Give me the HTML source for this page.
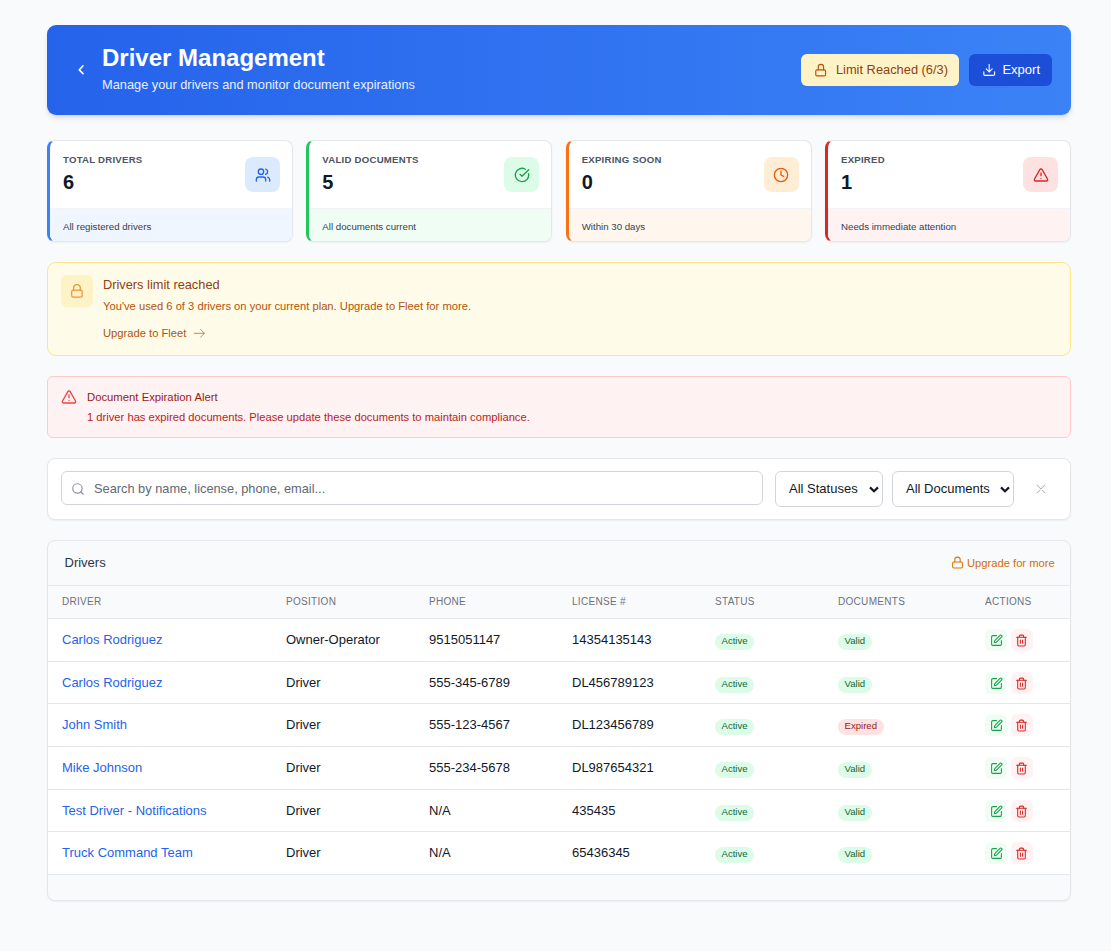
<!DOCTYPE html>
<html><head><meta charset="utf-8">
<style>
*{box-sizing:border-box;margin:0;padding:0}
html,body{width:1111px;height:951px;overflow:hidden;background:#f9fafb;font-family:"Liberation Sans",sans-serif;color:#111827}
.abs{position:absolute}
svg{display:block}
/* header */
.hdr{position:absolute;left:47px;top:25px;width:1024px;height:90px;border-radius:9px;background:linear-gradient(90deg,#2563eb 0%,#3b82f6 100%);box-shadow:0 4px 6px -1px rgba(0,0,0,.1),0 2px 4px -2px rgba(0,0,0,.1)}
.hdr .t{position:absolute;left:55px;top:17px;font-size:24px;line-height:32px;font-weight:700;color:#fff;white-space:nowrap}
.hdr .s{position:absolute;left:55px;top:51px;font-size:12.8px;line-height:18px;color:#e8f0fe;white-space:nowrap}
.btn{position:absolute;top:29px;height:32px;border-radius:6px;display:flex;align-items:center;padding:0 12px;font-size:13px;white-space:nowrap}
.btn svg{margin-right:6px;margin-left:1px}
.b1{left:754px;width:158px;background:#fef3c7;color:#92400e}
.b2{left:922px;width:83px;background:#1d4ed8;color:#fff}
/* stat cards */
.card{position:absolute;top:140px;width:246px;height:102px;background:#fff;border:1px solid #e5e7eb;border-left:3px solid;border-radius:8px;overflow:hidden;box-shadow:0 1px 2px rgba(0,0,0,.05)}
.card .lab{position:absolute;left:13px;top:13px;font-size:9.6px;line-height:12px;font-weight:700;letter-spacing:.25px;color:#4b5563;white-space:nowrap}
.card .num{position:absolute;left:13px;top:29px;font-size:20px;line-height:24px;font-weight:700;color:#111827}
.card .ic{position:absolute;right:12px;top:16px;width:35px;height:35px;border-radius:8px;display:flex;align-items:center;justify-content:center}
.card .ft{position:absolute;left:0;right:0;bottom:0;height:33px;border-top:1px solid #f1f3f6;font-size:9.7px;line-height:12px;padding:12px 0 0 13px;color:#374151;white-space:nowrap}
/* alerts */
.al1{position:absolute;left:47px;top:262px;width:1024px;height:94px;background:#fefce8;border:1px solid #fde68a;border-radius:9px}
.al2{position:absolute;left:47px;top:376px;width:1024px;height:62px;background:#fef2f2;border:1px solid #fecaca;border-radius:6px}
/* filter */
.flt{position:absolute;left:47px;top:458px;width:1024px;height:62px;background:#fff;border:1px solid #e5e7eb;border-radius:8px;box-shadow:0 1px 2px rgba(0,0,0,.05)}
.inp{position:absolute;left:13px;top:12px;width:702px;height:34px;border:1px solid #d1d5db;border-radius:6px}
.sel{position:absolute;top:12px;height:36px;border:1px solid #d1d5db;border-radius:6px;font-size:13px;line-height:34px;padding-left:13px;color:#111827;white-space:nowrap}
/* table */
.tbl{position:absolute;left:47px;top:540px;width:1024px;height:361px;background:#f9fafb;border:1px solid #e5e7eb;border-radius:8px;overflow:hidden;box-shadow:0 1px 2px rgba(0,0,0,.05)}
.th{position:absolute;top:44px;left:0;right:0;height:34px;border-top:1px solid #e5e7eb;border-bottom:1px solid #e5e7eb;background:#f9fafb}
.th span{position:absolute;top:10px;font-size:10px;line-height:12px;color:#6b7280;letter-spacing:.3px}
.row{position:absolute;left:0;right:0;height:43px;background:#fff;border-bottom:1px solid #e5e7eb}
.row span.c{position:absolute;top:12.5px;font-size:13px;line-height:16px;color:#111827;white-space:nowrap}
.row span.n{color:#2563eb}
.bdg{position:absolute;top:15px;height:16px;border-radius:8px;font-size:9.6px;line-height:13px;padding:0 6.5px;white-space:nowrap}
.ok{background:#dcfce7;color:#166534}
.bad{background:#fee2e2;color:#991b1b}
.act{position:absolute;top:10px;width:22px;height:22px;border-radius:6px;display:flex;align-items:center;justify-content:center}
</style></head>
<body>

<!-- header -->
<div class="hdr">
  <svg class="abs" style="left:25px;top:36px" width="18" height="18" viewBox="0 0 18 18" fill="none" stroke="#fff" stroke-width="1.55" stroke-linecap="round" stroke-linejoin="round"><path d="M11 4.7 7.2 8.9 11 12.6"/></svg>
  <div class="t">Driver Management</div>
  <div class="s">Manage your drivers and monitor document expirations</div>
  <div class="btn b1"><svg width="16" height="16" viewBox="0 0 16 16" fill="none" stroke="#b45309" stroke-width="1.25" stroke-linecap="round" stroke-linejoin="round"><rect x="1.9" y="7.8" width="10.5" height="6.5" rx="1.3"/><path d="M4.6 7.8V4.75a2.85 2.85 0 0 1 5.7 0V7.8"/></svg><span style="position:relative;top:-1px;left:1px;font-size:12.85px">Limit Reached (6/3)</span></div>
  <div class="btn b2"><svg width="16" height="16" viewBox="0 0 24 24" fill="none" stroke="#fff" stroke-width="1.8" stroke-linecap="round" stroke-linejoin="round"><path d="M21 15v4a2 2 0 0 1-2 2H5a2 2 0 0 1-2-2v-4"/><polyline points="7 10 12 15 17 10"/><line x1="12" x2="12" y1="15" y2="3"/></svg><span style="position:relative;top:-1px">Export</span></div>
</div>

<!-- stat cards -->
<div class="card" style="left:47px;border-left-color:#3b82f6">
  <div class="lab">TOTAL DRIVERS</div><div class="num">6</div>
  <div class="ic" style="background:#dbeafe"><svg width="16" height="16" viewBox="0 0 24 24" fill="none" stroke="#2563eb" stroke-width="2" stroke-linecap="round" stroke-linejoin="round"><path d="M16 21v-2a4 4 0 0 0-4-4H6a4 4 0 0 0-4 4v2"/><circle cx="9" cy="7" r="4"/><path d="M22 21v-2a4 4 0 0 0-3-3.87"/><path d="M16 3.13a4 4 0 0 1 0 7.75"/></svg></div>
  <div class="ft" style="background:#eff6ff">All registered drivers</div>
</div>
<div class="card" style="left:306.33px;border-left-color:#22c55e">
  <div class="lab">VALID DOCUMENTS</div><div class="num">5</div>
  <div class="ic" style="background:#dcfce7"><svg width="16" height="16" viewBox="0 0 24 24" fill="none" stroke="#16a34a" stroke-width="2" stroke-linecap="round" stroke-linejoin="round"><path d="M21.801 10A10 10 0 1 1 17 3.335"/><path d="m9 11 3 3L22 4"/></svg></div>
  <div class="ft" style="background:#f0fdf4">All documents current</div>
</div>
<div class="card" style="left:565.67px;border-left-color:#f97316">
  <div class="lab">EXPIRING SOON</div><div class="num">0</div>
  <div class="ic" style="background:#ffedd5"><svg width="16" height="16" viewBox="0 0 24 24" fill="none" stroke="#ea580c" stroke-width="2" stroke-linecap="round" stroke-linejoin="round"><circle cx="12" cy="12" r="10"/><polyline points="12 6 12 12 16 14"/></svg></div>
  <div class="ft" style="background:#fff7ed">Within 30 days</div>
</div>
<div class="card" style="left:825px;border-left-color:#dc2626">
  <div class="lab">EXPIRED</div><div class="num">1</div>
  <div class="ic" style="background:#fee2e2"><svg width="16" height="16" viewBox="0 0 24 24" fill="none" stroke="#dc2626" stroke-width="2" stroke-linecap="round" stroke-linejoin="round"><path d="m21.73 18-8-14a2 2 0 0 0-3.48 0l-8 14A2 2 0 0 0 4 21h16a2 2 0 0 0 1.73-3"/><path d="M12 9v4"/><path d="M12 17h.01"/></svg></div>
  <div class="ft" style="background:#fef2f2">Needs immediate attention</div>
</div>

<!-- limit alert -->
<div class="al1">
  <div class="abs" style="left:13px;top:12px;width:32px;height:32px;border-radius:6px;background:#fef3c7"><svg class="abs" style="left:0;top:0" width="32" height="32" viewBox="0 0 32 32" fill="none" stroke="#f0933a" stroke-width="1.25" stroke-linecap="round" stroke-linejoin="round"><rect x="10.7" y="15.2" width="10.5" height="7" rx="1.6"/><path d="M12.6 15.2V12.85a3.35 3.35 0 0 1 6.7 0V15.2"/></svg></div>
  <div class="abs" style="left:55px;top:14px;font-size:12.8px;line-height:16px;color:#92400e;white-space:nowrap">Drivers limit reached</div>
  <div class="abs" style="left:55px;top:36px;font-size:11.2px;line-height:14px;color:#b45309;white-space:nowrap">You've used 6 of 3 drivers on your current plan. Upgrade to Fleet for more.</div>
  <div class="abs" style="left:55px;top:63px;font-size:11.2px;line-height:14px;color:#b45309;white-space:nowrap">Upgrade to Fleet</div>
  <svg class="abs" style="left:145px;top:66px" width="12" height="10" viewBox="0 0 12 10" fill="none" stroke="#c7822f" stroke-width="0.95" stroke-linecap="round" stroke-linejoin="round"><path d="M1.3 4.3h10M7.6 0.4l3.8 3.9-3.8 3.9"/></svg>
</div>

<!-- doc alert -->
<div class="al2">
  <svg class="abs" style="left:13px;top:12px" width="16" height="16" viewBox="0 0 24 24" fill="none" stroke="#ef4444" stroke-width="2" stroke-linecap="round" stroke-linejoin="round"><path d="m21.73 18-8-14a2 2 0 0 0-3.48 0l-8 14A2 2 0 0 0 4 21h16a2 2 0 0 0 1.73-3"/><path d="M12 9v4"/><path d="M12 17h.01"/></svg>
  <div class="abs" style="left:39px;top:13px;font-size:11.3px;line-height:14px;color:#991b1b;white-space:nowrap">Document Expiration Alert</div>
  <div class="abs" style="left:39px;top:33px;font-size:11.2px;line-height:14px;color:#b91c1c;white-space:nowrap">1 driver has expired documents. Please update these documents to maintain compliance.</div>
</div>

<!-- filters -->
<div class="flt">
  <div class="inp"><svg class="abs" style="left:9px;top:10px" width="14" height="14" viewBox="0 0 24 24" fill="none" stroke="#958fa6" stroke-width="2" stroke-linecap="round" stroke-linejoin="round"><circle cx="11" cy="11" r="8"/><path d="m21 21-4.3-4.3"/></svg>
  <span class="abs" style="left:32px;top:9px;font-size:12.8px;line-height:16px;color:#626874;white-space:nowrap">Search by name, license, phone, email...</span></div>
  <div class="sel" style="left:727px;width:108px">All Statuses<svg class="abs" style="right:2px;top:11px" width="12" height="12" viewBox="0 0 12 12" fill="none" stroke="#111827" stroke-width="2.2" stroke-linecap="butt" stroke-linejoin="miter"><path d="M2 4.4 6 8.2l4-3.8"/></svg></div>
  <div class="sel" style="left:844px;width:122px">All Documents<svg class="abs" style="right:2px;top:11px" width="12" height="12" viewBox="0 0 12 12" fill="none" stroke="#111827" stroke-width="2.2" stroke-linecap="butt" stroke-linejoin="miter"><path d="M2 4.4 6 8.2l4-3.8"/></svg></div>
  <svg class="abs" style="left:988px;top:25px" width="10" height="10" viewBox="0 0 10 10" fill="none" stroke="#b0b4bc" stroke-width="1.05" stroke-linecap="round"><path d="M1 1l8 8M9 1L1 9"/></svg>
</div>

<!-- table -->
<div class="tbl">
  <span class="abs" style="left:16.5px;top:14px;font-size:13px;line-height:16px;color:#2b3544">Drivers</span>
  <div class="abs" style="left:903px;top:14.5px;display:flex;align-items:center;font-size:11.2px;line-height:14px;color:#cf6f08;white-space:nowrap"><svg width="13" height="13" viewBox="0 0 24 24" fill="none" stroke="#d97706" stroke-width="2" stroke-linecap="round" stroke-linejoin="round" style="margin-right:3px"><rect width="18" height="11" x="3" y="11" rx="2" ry="2"/><path d="M7 11V7a5 5 0 0 1 10 0v4"/></svg>Upgrade for more</div>
  <div class="th"><span style="left:14px">DRIVER</span><span style="left:238px">POSITION</span><span style="left:381px">PHONE</span><span style="left:524px">LICENSE #</span><span style="left:667px">STATUS</span><span style="left:790px">DOCUMENTS</span><span style="left:937px">ACTIONS</span></div>
<div class="row" style="top:78px;height:43px">
  <span class="c n" style="left:14px">Carlos Rodriguez</span><span class="c" style="left:238px">Owner-Operator</span><span class="c" style="left:381px">9515051147</span><span class="c" style="left:524px">14354135143</span>
  <span class="bdg ok" style="left:667px">Active</span><span class="bdg ok" style="left:790px">Valid</span>
  <div class="act" style="left:937px;background:#f0fdf4"><svg width="13" height="13" viewBox="0 0 24 24" fill="none" stroke="#16a34a" stroke-width="2" stroke-linecap="round" stroke-linejoin="round"><path d="M12 3H5a2 2 0 0 0-2 2v14a2 2 0 0 0 2 2h14a2 2 0 0 0 2-2v-7"/><path d="M18.375 2.625a1 1 0 0 1 3 3l-9.013 9.014a2 2 0 0 1-.853.505l-2.873.84a.5.5 0 0 1-.62-.62l.84-2.873a2 2 0 0 1 .506-.852z"/></svg></div><div class="act" style="left:963px;background:#fef2f2"><svg style="margin-left:-2px" width="13" height="13" viewBox="0 0 24 24" fill="none" stroke="#dc2626" stroke-width="2" stroke-linecap="round" stroke-linejoin="round"><path d="M3 6h18"/><path d="M19 6v14c0 1-1 2-2 2H7c-1 0-2-1-2-2V6"/><path d="M8 6V4c0-1 1-2 2-2h4c1 0 2 1 2 2v2"/><line x1="10" x2="10" y1="11" y2="17"/><line x1="14" x2="14" y1="11" y2="17"/></svg></div>
</div>
<div class="row" style="top:121px;height:42px">
  <span class="c n" style="left:14px">Carlos Rodriguez</span><span class="c" style="left:238px">Driver</span><span class="c" style="left:381px">555-345-6789</span><span class="c" style="left:524px">DL456789123</span>
  <span class="bdg ok" style="left:667px">Active</span><span class="bdg ok" style="left:790px">Valid</span>
  <div class="act" style="left:937px;background:#f0fdf4"><svg width="13" height="13" viewBox="0 0 24 24" fill="none" stroke="#16a34a" stroke-width="2" stroke-linecap="round" stroke-linejoin="round"><path d="M12 3H5a2 2 0 0 0-2 2v14a2 2 0 0 0 2 2h14a2 2 0 0 0 2-2v-7"/><path d="M18.375 2.625a1 1 0 0 1 3 3l-9.013 9.014a2 2 0 0 1-.853.505l-2.873.84a.5.5 0 0 1-.62-.62l.84-2.873a2 2 0 0 1 .506-.852z"/></svg></div><div class="act" style="left:963px;background:#fef2f2"><svg style="margin-left:-2px" width="13" height="13" viewBox="0 0 24 24" fill="none" stroke="#dc2626" stroke-width="2" stroke-linecap="round" stroke-linejoin="round"><path d="M3 6h18"/><path d="M19 6v14c0 1-1 2-2 2H7c-1 0-2-1-2-2V6"/><path d="M8 6V4c0-1 1-2 2-2h4c1 0 2 1 2 2v2"/><line x1="10" x2="10" y1="11" y2="17"/><line x1="14" x2="14" y1="11" y2="17"/></svg></div>
</div>
<div class="row" style="top:163px;height:43px">
  <span class="c n" style="left:14px">John Smith</span><span class="c" style="left:238px">Driver</span><span class="c" style="left:381px">555-123-4567</span><span class="c" style="left:524px">DL123456789</span>
  <span class="bdg ok" style="left:667px">Active</span><span class="bdg bad" style="left:790px">Expired</span>
  <div class="act" style="left:937px;background:#f0fdf4"><svg width="13" height="13" viewBox="0 0 24 24" fill="none" stroke="#16a34a" stroke-width="2" stroke-linecap="round" stroke-linejoin="round"><path d="M12 3H5a2 2 0 0 0-2 2v14a2 2 0 0 0 2 2h14a2 2 0 0 0 2-2v-7"/><path d="M18.375 2.625a1 1 0 0 1 3 3l-9.013 9.014a2 2 0 0 1-.853.505l-2.873.84a.5.5 0 0 1-.62-.62l.84-2.873a2 2 0 0 1 .506-.852z"/></svg></div><div class="act" style="left:963px;background:#fef2f2"><svg style="margin-left:-2px" width="13" height="13" viewBox="0 0 24 24" fill="none" stroke="#dc2626" stroke-width="2" stroke-linecap="round" stroke-linejoin="round"><path d="M3 6h18"/><path d="M19 6v14c0 1-1 2-2 2H7c-1 0-2-1-2-2V6"/><path d="M8 6V4c0-1 1-2 2-2h4c1 0 2 1 2 2v2"/><line x1="10" x2="10" y1="11" y2="17"/><line x1="14" x2="14" y1="11" y2="17"/></svg></div>
</div>
<div class="row" style="top:206px;height:43px">
  <span class="c n" style="left:14px">Mike Johnson</span><span class="c" style="left:238px">Driver</span><span class="c" style="left:381px">555-234-5678</span><span class="c" style="left:524px">DL987654321</span>
  <span class="bdg ok" style="left:667px">Active</span><span class="bdg ok" style="left:790px">Valid</span>
  <div class="act" style="left:937px;background:#f0fdf4"><svg width="13" height="13" viewBox="0 0 24 24" fill="none" stroke="#16a34a" stroke-width="2" stroke-linecap="round" stroke-linejoin="round"><path d="M12 3H5a2 2 0 0 0-2 2v14a2 2 0 0 0 2 2h14a2 2 0 0 0 2-2v-7"/><path d="M18.375 2.625a1 1 0 0 1 3 3l-9.013 9.014a2 2 0 0 1-.853.505l-2.873.84a.5.5 0 0 1-.62-.62l.84-2.873a2 2 0 0 1 .506-.852z"/></svg></div><div class="act" style="left:963px;background:#fef2f2"><svg style="margin-left:-2px" width="13" height="13" viewBox="0 0 24 24" fill="none" stroke="#dc2626" stroke-width="2" stroke-linecap="round" stroke-linejoin="round"><path d="M3 6h18"/><path d="M19 6v14c0 1-1 2-2 2H7c-1 0-2-1-2-2V6"/><path d="M8 6V4c0-1 1-2 2-2h4c1 0 2 1 2 2v2"/><line x1="10" x2="10" y1="11" y2="17"/><line x1="14" x2="14" y1="11" y2="17"/></svg></div>
</div>
<div class="row" style="top:249px;height:42px">
  <span class="c n" style="left:14px">Test Driver - Notifications</span><span class="c" style="left:238px">Driver</span><span class="c" style="left:381px">N/A</span><span class="c" style="left:524px">435435</span>
  <span class="bdg ok" style="left:667px">Active</span><span class="bdg ok" style="left:790px">Valid</span>
  <div class="act" style="left:937px;background:#f0fdf4"><svg width="13" height="13" viewBox="0 0 24 24" fill="none" stroke="#16a34a" stroke-width="2" stroke-linecap="round" stroke-linejoin="round"><path d="M12 3H5a2 2 0 0 0-2 2v14a2 2 0 0 0 2 2h14a2 2 0 0 0 2-2v-7"/><path d="M18.375 2.625a1 1 0 0 1 3 3l-9.013 9.014a2 2 0 0 1-.853.505l-2.873.84a.5.5 0 0 1-.62-.62l.84-2.873a2 2 0 0 1 .506-.852z"/></svg></div><div class="act" style="left:963px;background:#fef2f2"><svg style="margin-left:-2px" width="13" height="13" viewBox="0 0 24 24" fill="none" stroke="#dc2626" stroke-width="2" stroke-linecap="round" stroke-linejoin="round"><path d="M3 6h18"/><path d="M19 6v14c0 1-1 2-2 2H7c-1 0-2-1-2-2V6"/><path d="M8 6V4c0-1 1-2 2-2h4c1 0 2 1 2 2v2"/><line x1="10" x2="10" y1="11" y2="17"/><line x1="14" x2="14" y1="11" y2="17"/></svg></div>
</div>
<div class="row" style="top:291px;height:43px">
  <span class="c n" style="left:14px">Truck Command Team</span><span class="c" style="left:238px">Driver</span><span class="c" style="left:381px">N/A</span><span class="c" style="left:524px">65436345</span>
  <span class="bdg ok" style="left:667px">Active</span><span class="bdg ok" style="left:790px">Valid</span>
  <div class="act" style="left:937px;background:#f0fdf4"><svg width="13" height="13" viewBox="0 0 24 24" fill="none" stroke="#16a34a" stroke-width="2" stroke-linecap="round" stroke-linejoin="round"><path d="M12 3H5a2 2 0 0 0-2 2v14a2 2 0 0 0 2 2h14a2 2 0 0 0 2-2v-7"/><path d="M18.375 2.625a1 1 0 0 1 3 3l-9.013 9.014a2 2 0 0 1-.853.505l-2.873.84a.5.5 0 0 1-.62-.62l.84-2.873a2 2 0 0 1 .506-.852z"/></svg></div><div class="act" style="left:963px;background:#fef2f2"><svg style="margin-left:-2px" width="13" height="13" viewBox="0 0 24 24" fill="none" stroke="#dc2626" stroke-width="2" stroke-linecap="round" stroke-linejoin="round"><path d="M3 6h18"/><path d="M19 6v14c0 1-1 2-2 2H7c-1 0-2-1-2-2V6"/><path d="M8 6V4c0-1 1-2 2-2h4c1 0 2 1 2 2v2"/><line x1="10" x2="10" y1="11" y2="17"/><line x1="14" x2="14" y1="11" y2="17"/></svg></div>
</div>

</div>

</body></html>
